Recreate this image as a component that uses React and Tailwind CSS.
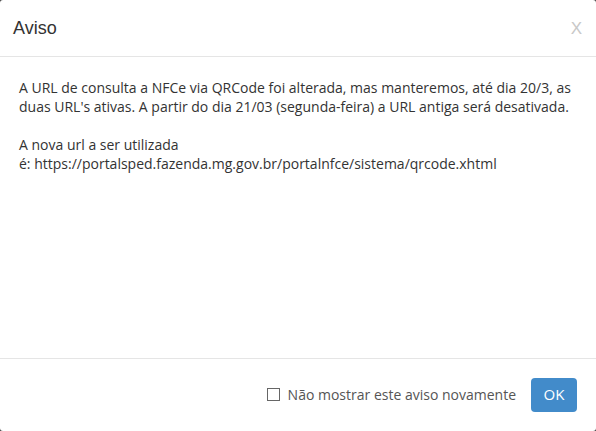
export default function App() {
  return (
    <div className="w-[596px] h-[431px] bg-[#444]">
      <div className="w-full h-full bg-white rounded-[3px] flex flex-col overflow-hidden">
        <div className="h-[57px] flex items-center justify-between border-b border-[#e5e5e5] pl-[13px] pr-[14px]">
          <h4 className="text-[18px] text-[#333] font-['Liberation_Sans',Arial,sans-serif] leading-none">Aviso</h4>
          <span className="text-[#c8c8c8] text-[17px] font-['Liberation_Sans',Arial,sans-serif] leading-none">X</span>
        </div>
        <div className="h-[301px] px-[19px] pt-[21px] font-['Open_Sans',sans-serif] text-[14px] leading-[19px] text-[#333]">
          <p>A URL de consulta a NFCe via QRCode foi alterada, mas manteremos, até dia 20/3, as duas URL's ativas. A partir do dia 21/03 (segunda-feira) a URL antiga será desativada.</p>
          <p className="mt-[19px]">A nova url a ser utilizada</p>
          <p>é: https://portalsped.fazenda.mg.gov.br/portalnfce/sistema/qrcode.xhtml</p>
        </div>
        <div className="flex-1 border-t border-[#e5e5e5] flex items-center justify-end pr-[19px] pb-[1px] font-['Open_Sans',sans-serif]">
          <label className="flex items-center gap-[8px] text-[14px] text-[#555]">
            <span className="w-[13px] h-[13px] border border-[#666] bg-white inline-block"></span>
            <span>Não mostrar este aviso novamente</span>
          </label>
          <button className="ml-[15px] w-[46px] h-[34px] rounded-[4px] bg-[#428bca] text-white text-[15px] font-['Open_Sans',sans-serif]">OK</button>
        </div>
      </div>
    </div>
  );
}
